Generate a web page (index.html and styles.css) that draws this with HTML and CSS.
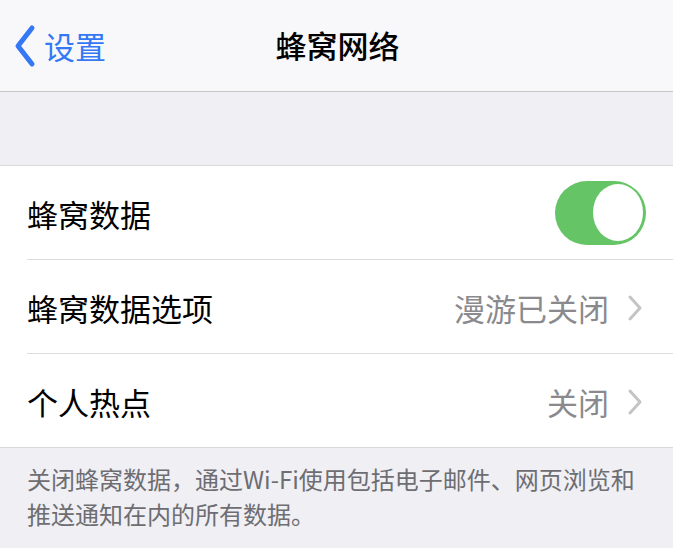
FILE: index.html
```html
<!DOCTYPE html>
<html lang="zh">
<head>
    <meta charset="UTF-8">
    <title>蜂窝网络</title>
    <link rel="stylesheet" href="styles.css">
</head>
<body>
    <div class="navbar">
        <a class="back" href="#">
            <svg class="back-icon" viewBox="0 0 26 44" width="26" height="44">
                <path d="M20 4 L6 22 L20 40" fill="none" stroke="#3478f6" stroke-width="5" stroke-linecap="round" stroke-linejoin="round"/>
            </svg>
            <span>设置</span>
        </a>
        <div class="title">蜂窝网络</div>
    </div>

    <div class="gap"></div>

    <div class="group">
        <div class="row">
            <div class="label">蜂窝数据</div>
            <div class="switch on"><div class="knob"></div></div>
        </div>
        <div class="row">
            <div class="label">蜂窝数据选项</div>
            <div class="value">漫游已关闭</div>
            <svg class="chevron" viewBox="0 0 16 28" width="16" height="28">
                <path d="M3 3 L13 14 L3 25" fill="none" stroke="#c4c4c7" stroke-width="3" stroke-linecap="round" stroke-linejoin="round"/>
            </svg>
        </div>
        <div class="row">
            <div class="label">个人热点</div>
            <div class="value">关闭</div>
            <svg class="chevron" viewBox="0 0 16 28" width="16" height="28">
                <path d="M3 3 L13 14 L3 25" fill="none" stroke="#c4c4c7" stroke-width="3" stroke-linecap="round" stroke-linejoin="round"/>
            </svg>
        </div>
    </div>

    <p class="footer">关闭蜂窝数据，通过Wi-Fi使用包括电子邮件、网页浏览和推送通知在内的所有数据。</p>
</body>
</html>
```

FILE: styles.css
```css
body {
    margin: 0;
    background: #efeff4;
    font-family: "Noto Sans CJK SC", "Noto Sans", sans-serif;
    width: 673px;
    height: 548px;
    overflow: hidden;
}
.navbar {
    height: 91px;
    background: #f8f8fa;
    border-bottom: 1px solid #c6c6c9;
    display: flex;
    align-items: center;
    justify-content: center;
    position: relative;
}
.back {
    position: absolute;
    left: 12px;
    top: 23px;
    display: flex;
    align-items: center;
    color: #3478f6;
    text-decoration: none;
    font-size: 31px;
}
.back-icon {
    margin-right: 6px;
}
.title {
    font-size: 31px;
    font-weight: 500;
    color: #000;
    margin-top: -2px;
    margin-left: 2px;
}
.gap {
    height: 73px;
    border-bottom: 1px solid #d8d8dc;
}
.group {
    background: #fff;
    border-bottom: 1px solid #d8d8dc;
}
.row {
    height: 93px;
    margin-left: 27px;
    padding-right: 30px;
    display: flex;
    align-items: center;
    border-bottom: 1px solid #dcdcdf;
}
.row:last-child {
    border-bottom: none;
}
.label {
    flex: 1;
    font-size: 31px;
    color: #000;
    margin-top: 2px;
}
.value {
    font-size: 31px;
    color: #8a8a8e;
    margin-right: 18px;
    margin-top: 2px;
}
.chevron {
    margin-top: 2px;
}
.switch {
    width: 91px;
    height: 64px;
    border-radius: 32px;
    background: #e5e5ea;
    display: flex;
    align-items: center;
    justify-content: flex-end;
    padding-right: 3px;
    box-sizing: border-box;
    margin-right: -3px;
}
.switch.on {
    background: #64c466;
}
.knob {
    width: 50px;
    height: 57px;
    border-radius: 50%;
    background: #fff;
}
.footer {
    margin: 13px 30px 0 27px;
    font-size: 24px;
    line-height: 35px;
    color: #6d6d72;
}
```
